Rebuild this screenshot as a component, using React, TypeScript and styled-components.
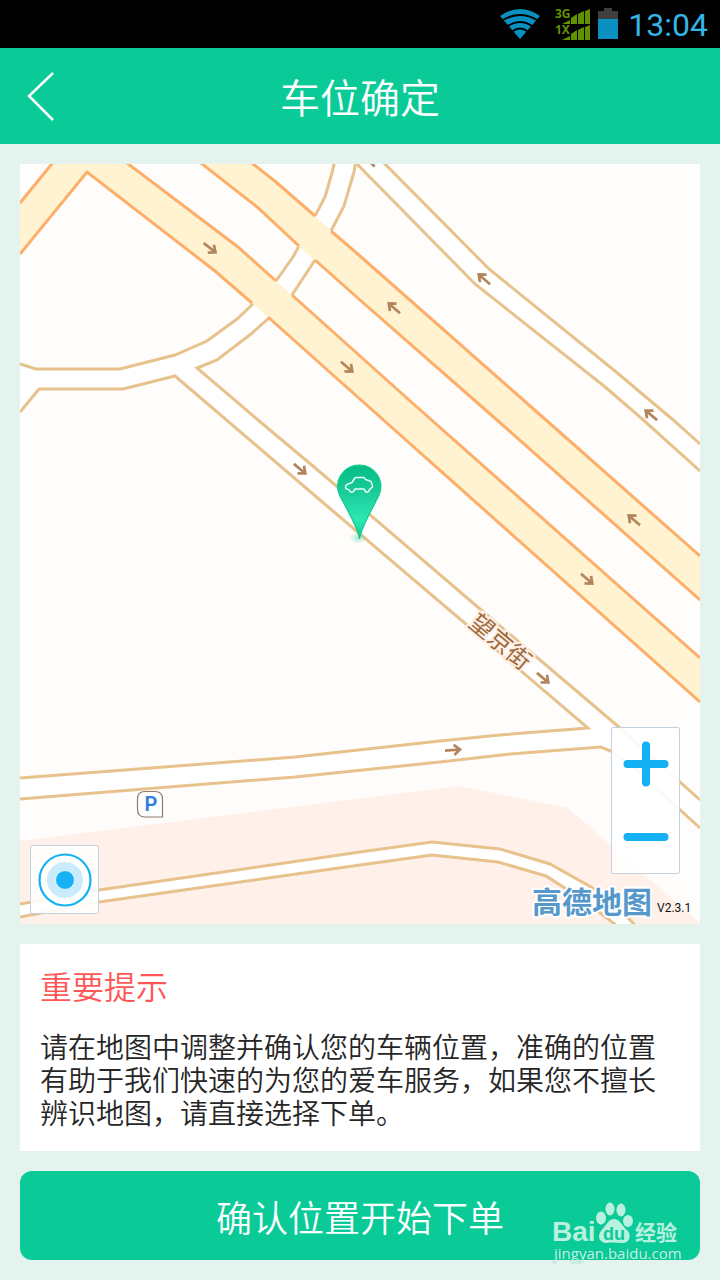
import React from "react";
import styled, { createGlobalStyle } from "styled-components";

const GREEN = "#0acb97";
const BLUE = "#14b1f5";
const SANS = '"Noto Sans CJK SC", sans-serif';

const GlobalStyle = createGlobalStyle`
  *, *::before, *::after { box-sizing: border-box; }
  body { margin: 0; background: #e5f3ee; font-family: ${SANS}; }
  button { margin: 0; padding: 0; border: 0; background: none; font: inherit; cursor: pointer; }
  svg { display: block; }
`;

const Page = styled.div`
  display: flex;
  flex-direction: column;
  min-height: 100vh;
`;

const StatusBar = styled.div`
  display: flex;
  align-items: center;
  justify-content: flex-end;
  height: 48px;
  padding-right: 12px;
  background: #000;
`;

const Clock = styled.time`
  margin-left: 10px;
  color: #33b5e5;
  font: 400 32px/48px Roboto, sans-serif;
  padding-top: 2px;
`;

const Header = styled.header`
  display: grid;
  grid-template-columns: 96px 1fr 96px;
  align-items: center;
  height: 96px;
  background: ${GREEN};
`;

const BackButton = styled.button`
  display: flex;
  align-items: center;
  height: 96px;
  padding-left: 26px;
`;

const Title = styled.h1`
  margin: 0;
  color: #fff;
  font-size: 40px;
  line-height: 60px;
  font-weight: 350;
  text-align: center;
`;

const Main = styled.main`
  display: flex;
  flex-direction: column;
  gap: 20px;
  padding: 20px;
`;

const MapPanel = styled.section`
  position: relative;
  background: #fefdfb;
`;

const MapDrawing = styled.svg`
  width: 100%;
  height: auto;
`;

const MapControl = styled.div<{ $corner: "left" | "right" }>`
  position: absolute;
  display: flex;
  flex-direction: column;
  ${(p) => (p.$corner === "left" ? "left: 10px; bottom: 10px;" : "right: 20px; bottom: 50px;")}
  border: 1px solid #c3d2e0;
  border-radius: 2px;
  background: rgba(255, 255, 255, 0.9);
`;

const ControlButton = styled.button<{ $height: number }>`
  display: flex;
  align-items: center;
  justify-content: center;
  width: 67px;
  height: ${(p) => p.$height}px;
`;

const Notice = styled.section`
  padding: 18px 20px 22px;
  background: #fff;
`;

const NoticeTitle = styled.h2`
  margin: 0 0 22px;
  color: #ff5757;
  font-size: 32px;
  line-height: 46px;
  font-weight: 350;
`;

const NoticeText = styled.p`
  margin: 0;
  color: #262626;
  font-size: 28px;
  line-height: 33px;
  font-weight: 350;
`;

const Footer = styled.div`
  position: relative;
`;

const ConfirmButton = styled.button`
  width: 100%;
  height: 89px;
  border-radius: 12px;
  background: ${GREEN};
  color: #fff;
  font-size: 36px;
  font-weight: 350;
`;

const Watermark = styled.svg`
  position: absolute;
  right: 16px;
  bottom: -8px;
  pointer-events: none;
`;

const highwayEdge = { fill: "none", stroke: "#fdae69", strokeWidth: 3 };
const streetEdge = { fill: "none", stroke: "#e7c28c", strokeWidth: 3 };

const arrows: [number, number, number][] = [
  [210, 248, 38],
  [347, 367, 41],
  [300, 469, 40],
  [587, 579, 41],
  [543, 678, 40],
  [453, 750, -4],
  [394, 308, 221],
  [484, 279, 221],
  [651, 415, 220],
  [634, 520, 221],
  [369, 161, 225],
];

function StreetMap() {
  return (
    <MapDrawing viewBox="20 164 680 760" role="img" aria-label="地图">
      <path d="M20 841 460 786 568 808 700 923V924H20Z" fill="#fff0ea" />

      {/* side streets */}
      <g fill="#fff">
        <path d="M20 364 36 369H120L175 355 207 341 237 319 276 281 299 246 325 197 335 160H357L344 206 315 260 268 318 251 334 217 360 197 368 480 609 620 728 700 800V828L635 769 613 752 601 747 510 754 295 777 20 799V778L295 757 500 735 590 728 320 500 175 376 123 389H39L20 412Z" />
        <path d="M355 160 475 284 604 386 700 471V444L615 371 489 269 381 160Z" />
        <path d="M20 904 99 890 360 852 432 842 500 849 550 864 605 895 636 924H615L585 901 546 876 498 862 432 855 360 865 99 902 20 917Z" />
      </g>
      <g {...streetEdge}>
        <path d="M20 364 36 369H120L175 355 207 341 237 319 254 303M276 281 293 257 299 246M315 216 325 197 332 173 335 160" />
        <path d="M269 318 251 334 217 360 197 368 258 420 320 472 480 609 620 728 700 800M292 295 315 260M331 231 344 206 354 172 356 160" />
        <path d="M20 412 39 389H123L175 376 320 500 467 625 588 728 500 735 440 741 295 757 20 778" />
        <path d="M20 799 295 777 440 762 510 754 601 747 613 752 635 769 700 828" />
        <path d="M355 162 475 284 604 386 640 417 700 471M381 160 489 269 615 371 672 419 700 444" />
        <path d="M20 904 99 890 360 852 432 842 500 849 550 864 605 895 636 926M20 917 99 902 360 865 432 855 498 862 546 876 585 901 617 926" />
      </g>

      {/* trunk roads */}
      <g fill="#fff3d2">
        <path d="M55 160H122L238 247 276 281 409 400 700 658V702L361 400 252 303 215 271 87 172 20 254V203Z" />
        <path d="M197 160 257 207 298 246 360 300 497 420 700 600V556L546 420 360 256 276 182 248 160Z" />
      </g>
      <g {...highwayEdge}>
        <path d="M20 203 55 160M123 160 238 247 276 281M292 295 409 400 700 658" />
        <path d="M20 254 87 172 215 271 252 303M268 317 361 400 700 702" />
        <path d="M197 160 257 207 299 246M315 260 360 300 497 420 700 600" />
        <path d="M248 160 276 182 315 216M331 231 360 256 546 420 700 556" />
      </g>

      {arrows.map(([x, y, angle]) => (
        <path
          key={`${x}-${y}`}
          d="M-8 0H7M1-5 7 0 1 5"
          transform={`translate(${x} ${y}) rotate(${angle})`}
          fill="none"
          stroke="#b3855c"
          strokeWidth="2.7"
        />
      ))}

      <text
        transform="translate(500 642) rotate(40)"
        y="8"
        textAnchor="middle"
        fontFamily={SANS}
        fontSize="24"
        fill="#9c6b3c"
        stroke="#fff0e8"
        strokeWidth="4"
        paintOrder="stroke"
      >
        望京街
      </text>

      <path d="M145 791.500H155Q162.500 791.500 162.500 799V817H145Q137.500 817 137.500 809V799Q137.500 791.500 145 791.500Z" fill="#fff" stroke="#8c7b70" strokeWidth="1.200" />
      <text x="151" y="811" textAnchor="middle" fontFamily="Roboto, sans-serif" fontSize="20" fontWeight="600" fill="#2f7de1">
        P
      </text>

      {/* car position pin */}
      <defs>
        <linearGradient id="pin" x1="0" y1="0" x2="0" y2="1">
          <stop offset="0" stopColor="#04bd85" />
          <stop offset="0.350" stopColor="#18cb98" />
          <stop offset="0.750" stopColor="#2ee8b4" />
          <stop offset="1" stopColor="#0cc48d" />
        </linearGradient>
        <radialGradient id="pinShadow">
          <stop offset="0" stopColor="#5fcfaa" stopOpacity="0.500" />
          <stop offset="1" stopColor="#5fcfaa" stopOpacity="0" />
        </radialGradient>
      </defs>
      <ellipse cx="358" cy="538" rx="9" ry="6" fill="url(#pinShadow)" />
      <path d="M359.500 539C357.500 526 346 508 339.500 495A21.500 21.500 0 1 1 379 495C373 508 361.500 526 359.500 539Z" fill="url(#pin)" stroke="#0ccb8b" strokeWidth="1.200" />
      <path
        d="M345.500 487.500Q345.500 485 347 484.500L352 482.500 354.500 478.500Q355 477.500 356.500 477.500H363.500Q364.500 477.500 365.500 479.500L370 481Q371.500 481.500 372 484L372.500 487 370 489 368.500 491.500Q367 493 365.500 491.500L364 489H355L353.500 491.500Q352 493 350.500 491.800L348.500 489.500 346 488.800Z"
        fill="none"
        stroke="#e9fff7"
        strokeWidth="1.500"
        strokeLinejoin="round"
      />

      <g fontFamily={SANS} paintOrder="stroke">
        <text x="532" y="913" fontSize="30" fontWeight="700" fill="#5798cb" stroke="#fff" strokeWidth="4" strokeLinejoin="round">
          高德地图
        </text>
        <text x="657" y="912" fontFamily="Roboto, sans-serif" fontSize="12" fill="#111">
          V2.3.1
        </text>
      </g>
    </MapDrawing>
  );
}

function StatusIcons() {
  const bars = [
    [571, 577, 18, 14],
    [578, 584, 14, 11],
    [585, 590, 11, 9],
  ];
  return (
    <svg width="118" height="48" viewBox="500 0 118 48" aria-hidden="true">
      <path d="M520 39 500 16Q520 2 540 16Z" fill="#0a90c0" />
      <g fill="none" stroke="#000" strokeWidth="2">
        <path d="M502 20.500Q520 9.500 538 20.500M507 26.500Q520 17.500 533 26.500M512 31.500Q520 25.500 528 31.500" />
      </g>
      <g fill="#639200" fontFamily='"Noto Sans", sans-serif' fontSize="12" fontWeight="700">
        <text x="555" y="18">3G</text>
        <text x="555" y="34">1X</text>
        {[0, 16].map((dy) => (
          <g key={dy} transform={`translate(0 ${dy})`}>
            <path d="M562 24 570 20V24Z" />
            {bars.map(([l, r, yl, yr]) => (
              <path key={l} d={`M${l} 24V${yl}L${r} ${yr}V24Z`} />
            ))}
          </g>
        ))}
      </g>
      <path d="M598 11H604V8H612V11H618V19H598Z" fill="#404040" />
      <path d="M598 19H618V39H598Z" fill="#0a90c0" />
    </svg>
  );
}

function BaiduWatermark() {
  return (
    <Watermark width="132" height="68" viewBox="552 1200 132 68" role="img" aria-label="Baidu 经验">
      <g fill="#b9f0df">
        <text x="552" y="1241" fontFamily='"Liberation Sans", sans-serif' fontSize="28" fontWeight="700">
          Bai
        </text>
        <ellipse cx="601" cy="1218" rx="5" ry="6.500" />
        <ellipse cx="610" cy="1209" rx="4.500" ry="6.500" />
        <ellipse cx="621" cy="1210" rx="4.500" ry="6.500" />
        <ellipse cx="628" cy="1221" rx="5" ry="6" />
        <path d="M614 1219C620 1219 622 1226 627 1230 632 1235 630 1243 622 1243 617 1243 612 1242 607 1243 599 1243 597 1236 601 1231 606 1226 608 1219 614 1219Z" />
        <text x="635" y="1240" fontFamily={SANS} fontSize="21" fontWeight="700">
          经验
        </text>
      </g>
      <text x="614" y="1240" textAnchor="middle" fontFamily='"Liberation Sans", sans-serif' fontSize="18" fontWeight="700" fill={GREEN}>
        du
      </text>
      <text
        x="554"
        y="1259"
        fontFamily='"Open Sans", sans-serif'
        fontSize="15"
        fill="#c4f3e5"
        stroke="#009c70"
        strokeOpacity="0.150"
        strokeWidth="2"
        paintOrder="stroke"
      >
        jingyan.baidu.com
      </text>
    </Watermark>
  );
}

export default function App() {
  return (
    <Page lang="zh-CN">
      <GlobalStyle />
      <StatusBar>
        <StatusIcons />
        <Clock>13:04</Clock>
      </StatusBar>
      <Header>
        <BackButton type="button" aria-label="返回">
          <svg width="30" height="52" viewBox="0 0 30 52">
            <path d="M27 3 3 26 27 50" fill="none" stroke="#fff" strokeWidth="2.500" />
          </svg>
        </BackButton>
        <Title>车位确定</Title>
      </Header>
      <Main>
        <MapPanel>
          <StreetMap />
          <MapControl $corner="left">
            <ControlButton type="button" $height={67} aria-label="定位">
              <svg width="56" height="56" viewBox="-28 -28 56 56">
                <circle r="25.500" fill="#fff" stroke={BLUE} strokeWidth="2.200" />
                <circle r="18" fill="#c9ebfb" />
                <circle r="9.500" fill={BLUE} stroke="#e6f6fd" strokeWidth="1" />
              </svg>
            </ControlButton>
          </MapControl>
          <MapControl $corner="right">
            <ControlButton type="button" $height={72} aria-label="放大">
              <svg width="46" height="46" viewBox="-23 -23 46 46">
                <path d="M-18.500 0H18.500M0-18.500V18.500" stroke={BLUE} strokeWidth="8" strokeLinecap="round" />
              </svg>
            </ControlButton>
            <ControlButton type="button" $height={73} aria-label="缩小">
              <svg width="46" height="46" viewBox="-23 -23 46 46">
                <path d="M-18.500 0H18.500" stroke={BLUE} strokeWidth="8" strokeLinecap="round" />
              </svg>
            </ControlButton>
          </MapControl>
        </MapPanel>
        <Notice>
          <NoticeTitle>重要提示</NoticeTitle>
          <NoticeText>
            请在地图中调整并确认您的车辆位置，准确的位置有助于我们快速的为您的爱车服务，如果您不擅长辨识地图，请直接选择下单。
          </NoticeText>
        </Notice>
        <Footer>
          <ConfirmButton type="button">确认位置开始下单</ConfirmButton>
          <BaiduWatermark />
        </Footer>
      </Main>
    </Page>
  );
}
